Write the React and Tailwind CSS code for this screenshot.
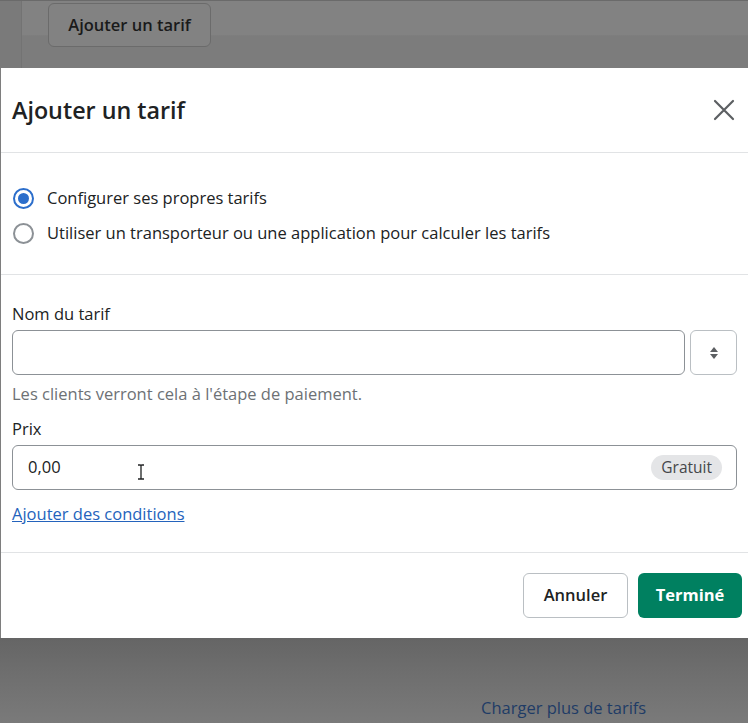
import React, { useState } from 'react';

const Radio = ({ checked, label, onClick }) => (
  <label className="flex items-center gap-[13px] h-[35px] cursor-pointer" onClick={onClick}>
    <span
      className={
        checked
          ? 'w-[21px] h-[21px] rounded-full border-2 border-[#2c6ecb] flex items-center justify-center'
          : 'w-[21px] h-[21px] rounded-full border-2 border-[#8c9196]'
      }
    >
      {checked && <span className="w-[11px] h-[11px] rounded-full bg-[#2c6ecb]" />}
    </span>
    <span className="text-[16.5px] text-[#202223]">{label}</span>
  </label>
);

const App = () => {
  const [mode, setMode] = useState('own');
  const [name, setName] = useState('');

  return (
    <div
      className="w-[748px] h-[723px] overflow-hidden flex flex-col bg-[#7e7e7e]"
      style={{ fontFamily: '"Open Sans", "Noto Sans", sans-serif' }}
    >
      {/* page behind the overlay */}
      <div className="h-[68px] shrink-0 flex border-t border-[#6a6a6a] bg-[linear-gradient(#828282,#828282_50%,#7c7c7c_52%,#7c7c7c)]">
        <div className="w-[22px] border-r border-[#737373] bg-[#7a7a7a]" />
        <div className="pl-[26px] pt-[2px]">
          <button className="w-[163px] h-[44px] rounded-[6px] border border-[#6b6b6b] bg-[#828282] text-[16.5px] font-semibold text-[#1a1a1a]">
            Ajouter un tarif
          </button>
        </div>
      </div>

      {/* modal */}
      <div className="shrink-0 ml-[1px] bg-white flex flex-col">
        <div className="h-[85px] flex items-center justify-between pl-[11px] pr-[12px] border-b border-[#e1e3e5]">
          <h2 className="text-[23.3px] font-semibold text-[#202223]">Ajouter un tarif</h2>
          <button className="w-[24px] h-[24px] flex items-center justify-center text-[#5c5f62]">
            <svg width="22" height="22" viewBox="0 0 22 22" fill="none" stroke="currentColor" strokeWidth="2.2" strokeLinecap="round">
              <path d="M2 2L20 20M20 2L2 20" />
            </svg>
          </button>
        </div>

        <div className="pt-[28px] pb-[23px] pl-[12px] border-b border-[#e1e3e5] flex flex-col">
          <Radio checked={mode === 'own'} onClick={() => setMode('own')} label="Configurer ses propres tarifs" />
          <Radio
            checked={mode === 'carrier'}
            onClick={() => setMode('carrier')}
            label="Utiliser un transporteur ou une application pour calculer les tarifs"
          />
        </div>

        <div className="pt-[27px] pb-[26px] pl-[11px] pr-[11px] border-b border-[#e1e3e5] flex flex-col">
          <label className="text-[16.5px] text-[#202223] leading-[24px] mb-[4px]">Nom du tarif</label>
          <div className="flex gap-[5px]">
            <input
              value={name}
              onChange={(e) => setName(e.target.value)}
              className="flex-1 h-[45px] rounded-[6px] border border-[#8c9196] px-[12px] text-[16.5px] outline-none"
            />
            <button className="w-[47px] h-[45px] rounded-[6px] border border-[#babfc3] flex items-center justify-center">
              <svg width="10" height="14" viewBox="0 0 10 14" fill="#5c5f62">
                <path d="M5 1L9 6H1Z" />
                <path d="M5 13L1 8H9Z" />
              </svg>
            </button>
          </div>
          <p className="text-[16.5px] text-[#6d7175] leading-[24px] mt-[7px]">Les clients verront cela à l'étape de paiement.</p>
          <label className="text-[16.5px] text-[#202223] leading-[24px] mt-[11px] mb-[4px]">Prix</label>
          <div className="h-[45px] rounded-[6px] border border-[#8c9196] flex items-center pl-[15px] pr-[14px]">
            <span className="text-[16.5px] text-[#202223]">0,00</span>
            <span className="ml-[76px] mt-[8px] text-[#202223]">
              <svg width="8" height="16" viewBox="0 0 8 16" fill="none" stroke="currentColor" strokeWidth="1.3">
                <path d="M1 1H3.2Q4 1 4 2V14Q4 15 3.2 15H1M7 1H4.8Q4 1 4 2M4 14Q4 15 4.8 15H7" />
              </svg>
            </span>
            <span className="ml-auto h-[25px] px-[10px] rounded-full bg-[#e4e5e7] text-[15.5px] text-[#44474a] flex items-center">Gratuit</span>
          </div>
          <a href="#" className="mt-[12px] text-[16.5px] leading-[24px] text-[#2463bc] underline self-start">
            Ajouter des conditions
          </a>
        </div>

        <div className="h-[85px] flex items-center justify-end gap-[10px] pr-[6px]">
          <button className="w-[105px] h-[45px] rounded-[6px] border border-[#babfc3] bg-white text-[16.5px] font-semibold text-[#202223]">
            Annuler
          </button>
          <button className="w-[104px] h-[45px] rounded-[6px] bg-[#008060] text-[16.5px] font-bold text-white">
            Terminé
          </button>
        </div>
      </div>

      {/* page behind the overlay, bottom */}
      <div className="flex-1 flex flex-col bg-[linear-gradient(#656565,#6e6e6e_40%,#7a7a7a)]">
        <div className="flex-1" />
        <a href="#" className="pl-[481px] pb-[3px] text-[16.5px] leading-[24px] text-[#1f3c66]">Charger plus de tarifs</a>
      </div>
    </div>
  );
};

export default App;
